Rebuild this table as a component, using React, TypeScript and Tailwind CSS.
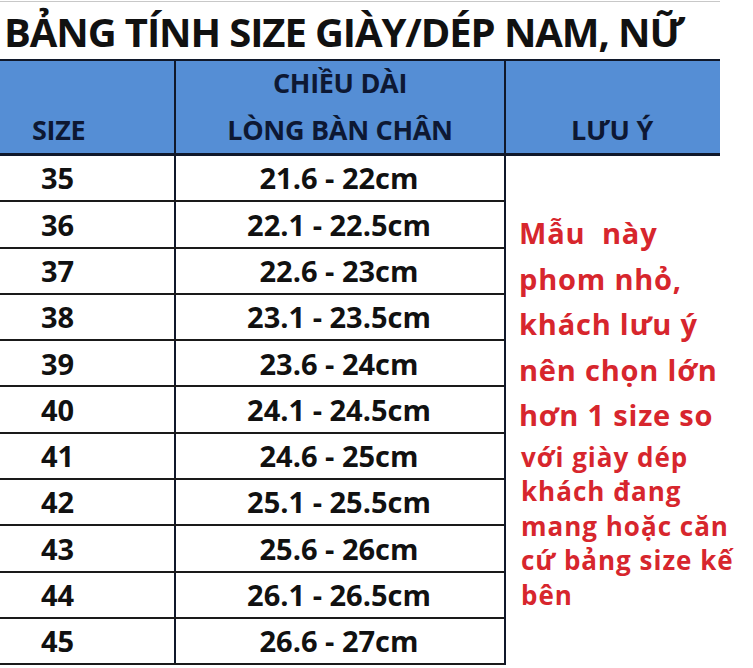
import React from "react";

const rows: [string, string][] = [
  ["35", "21.6 - 22cm"],
  ["36", "22.1 - 22.5cm"],
  ["37", "22.6 - 23cm"],
  ["38", "23.1 - 23.5cm"],
  ["39", "23.6 - 24cm"],
  ["40", "24.1 - 24.5cm"],
  ["41", "24.6 - 25cm"],
  ["42", "25.1 - 25.5cm"],
  ["43", "25.6 - 26cm"],
  ["44", "26.1 - 26.5cm"],
  ["45", "26.6 - 27cm"],
];

export default function App() {
  return (
    <div
      className="relative w-[753px] h-[668px] overflow-hidden bg-white text-[#111]"
      style={{ fontFamily: '"Open Sans", "Noto Sans", sans-serif' }}
    >
      <div className="h-[2px] w-[720px] border-t border-[#c8c8c8] mt-[1px]" />
      <div className="h-[56px] pl-[4px] flex items-end">
        <h1 className="text-[40px] leading-none font-bold tracking-[-1.1px] pb-[7px] whitespace-nowrap">
          BẢNG TÍNH SIZE GIÀY/DÉP NAM, NỮ
        </h1>
      </div>

      {/* header */}
      <div className="flex w-[720px] h-[97px] bg-[#558ed5] border-t-2 border-b-[3px] border-[#10182a] text-[#0d1833] font-bold text-[27px] tracking-[-0.3px] leading-[47px]">
        <div className="w-[176px] shrink-0 border-r-2 border-[#10182a] flex items-end pl-[32px]">SIZE</div>
        <div className="w-[330px] shrink-0 border-r-2 border-[#10182a] flex flex-col items-center justify-end">
          <span>CHIỀU DÀI</span>
          <span>LÒNG BÀN CHÂN</span>
        </div>
        <div className="flex-1 flex items-end justify-center pr-[2px]">LƯU Ý</div>
      </div>

      {/* body */}
      <div className="flex w-[720px]">
        <div className="w-[506px] shrink-0 border-r-2 border-[#10182a]">
          {rows.map(([s, r]) => (
            <div key={s} className="flex h-[46.3px] border-b-2 border-[#1a1a1a] font-bold text-[29px]">
              <div className="w-[176px] shrink-0 border-r-2 border-[#10182a] pl-[41px] flex items-center">{s}</div>
              <div className="flex-1 flex items-center justify-center pr-[2px]">{r}</div>
            </div>
          ))}
        </div>
        <div className="flex-1 min-w-0 pl-[13px] text-[#d7262d] font-bold">
          <div className="mt-[54px] text-[29px] tracking-[0.8px] leading-[45.5px] whitespace-pre">
            {"Mẫu  này\nphom nhỏ,\nkhách lưu ý\nnên chọn lớn\nhơn 1 size so"}
          </div>
          <div className="mt-[2px] text-[26px] tracking-[1px] leading-[34.5px] whitespace-pre pl-[2px]">
            {"với giày dép\nkhách đang\nmang hoặc căn\ncứ bảng size kế\nbên"}
          </div>
        </div>
      </div>
    </div>
  );
}
